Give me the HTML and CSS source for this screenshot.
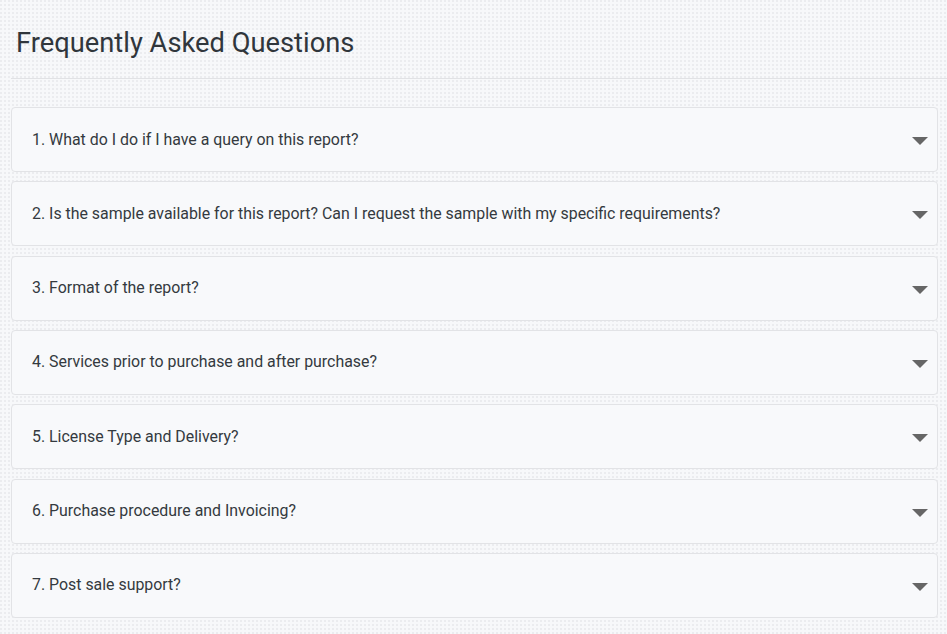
FILE: index.html
```html
<!DOCTYPE html>
<html lang="en">
<head>
<meta charset="utf-8">
<title>FAQ</title>
<link rel="stylesheet" href="styles.css">
</head>
<body>
<section class="faq">
  <h2 class="faq-title">Frequently Asked Questions</h2>
  <hr class="faq-rule">
  <div class="faq-list">
    <div class="faq-item"><span class="faq-q">1. What do I do if I have a query on this report?</span><span class="caret"></span></div>
    <div class="faq-item"><span class="faq-q">2. Is the sample available for this report? Can I request the sample with my specific requirements?</span><span class="caret"></span></div>
    <div class="faq-item"><span class="faq-q">3. Format of the report?</span><span class="caret"></span></div>
    <div class="faq-item"><span class="faq-q">4. Services prior to purchase and after purchase?</span><span class="caret"></span></div>
    <div class="faq-item"><span class="faq-q">5. License Type and Delivery?</span><span class="caret"></span></div>
    <div class="faq-item"><span class="faq-q">6. Purchase procedure and Invoicing?</span><span class="caret"></span></div>
    <div class="faq-item"><span class="faq-q">7. Post sale support?</span><span class="caret"></span></div>
  </div>
</section>
</body>
</html>
```
FILE: styles.css
```css
html, body {
  margin: 0;
  padding: 0;
}
body {
  font-family: Roboto, "Liberation Sans", sans-serif;
  background-color: #f7f8fa;
  background-image: radial-gradient(circle at 1px 1px, #ebecef 0.8px, transparent 1.1px);
  background-size: 4px 4px;
  color: #343a40;
  height: 634px;
  overflow: hidden;
}
.faq {
  padding-top: 26px;
}
.faq-title {
  margin: 0 0 0 16px;
  font-size: 27.3px;
  line-height: 34px;
  font-weight: 400;
  color: #30363c;
}
.faq-rule {
  margin: 18px 0 0 11px;
  border: 0;
  height: 1px;
  background: #e1e2e5;
}
.faq-list {
  margin: 28px 9px 0 11px;
  display: flex;
  flex-direction: column;
  gap: 9.33px;
}
.faq-item {
  box-sizing: border-box;
  min-height: 65px;
  display: flex;
  align-items: center;
  justify-content: space-between;
  padding: 0 9px 0 20px;
  background: #f8f9fb;
  border: 1px solid #e2e3e6;
  border-radius: 4px;
}
.faq-q {
  font-size: 15.9px;
  line-height: 22px;
  color: #343a40;
}
.caret {
  width: 0;
  height: 0;
  border-left: 8px solid transparent;
  border-right: 8px solid transparent;
  border-top: 8px solid #666;
  margin-top: 3px;
}
```
